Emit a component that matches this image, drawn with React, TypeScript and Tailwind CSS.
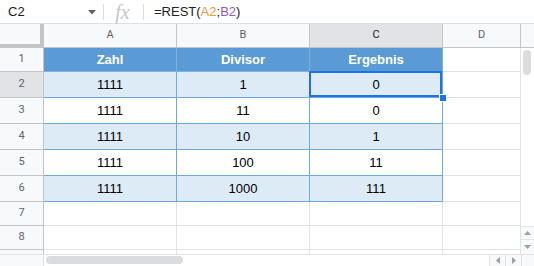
import React from 'react';

const cols = ['A', 'B', 'C', 'D'];

const rows = [
  { n: 1, vals: ['Zahl', 'Divisor', 'Ergebnis'], kind: 'head', h: 'h-[24px]' },
  { n: 2, vals: ['1111', '1', '0'], kind: 'band', h: 'h-[26px]' },
  { n: 3, vals: ['1111', '11', '0'], kind: 'plain', h: 'h-[26px]' },
  { n: 4, vals: ['1111', '10', '1'], kind: 'band', h: 'h-[26px]' },
  { n: 5, vals: ['1111', '100', '11'], kind: 'plain', h: 'h-[26px]' },
  { n: 6, vals: ['1111', '1000', '111'], kind: 'band', h: 'h-[26px]' },
  { n: 7, vals: [], kind: 'empty', h: 'h-[24px]' },
  { n: 8, vals: [], kind: 'empty', h: 'h-[24px]' },
];

function FormulaBar() {
  return (
    <div className="flex h-[24px] items-center border-b border-[#e1e1e1] text-[13px] text-[#202124]">
      <div className="flex h-full w-[103px] items-center justify-between pl-[8px] pr-[7px]">
        <span>C2</span>
        <svg width="8" height="5" viewBox="0 0 8 5" className="mt-[2px]">
          <path d="M0 0 L8 0 L4 4.5 Z" fill="#5f6368" />
        </svg>
      </div>
      <div className="h-[16px] w-px bg-[#dadce0]" />
      <div className="flex w-[39px] items-center justify-center pr-[2px] font-['Liberation_Serif',serif] text-[20px] italic leading-none text-[#c4c6c9]">
        fx
      </div>
      <div className="h-[16px] w-px bg-[#dadce0]" />
      <div className="pl-[10px]">
        =REST(<span className="text-[#f09c38]">A2</span>;<span className="text-[#9b59b6]">B2</span>)
      </div>
    </div>
  );
}

function ColumnHeader() {
  return (
    <div className="grid h-[24px] grid-cols-[44px_133px_133px_133px_78px_13px] font-['Roboto',sans-serif] text-[11px] text-[#5f6368]">
      <div className="border-b-[4px] border-r-[4px] border-[#c4c4c4] bg-[#f8f9fa]" />
      {cols.map((c) => (
        <div
          key={c}
          className={
            'flex items-center justify-center border-b border-r border-[#c4c4c4] ' +
            (c === 'C' ? 'bg-[#e1e3e6] text-[#202124]' : 'bg-[#f8f9fa]')
          }
        >
          {c}
        </div>
      ))}
      <div className="border-b border-[#c4c4c4] bg-[#f8f9fa]" />
    </div>
  );
}

function Row({ r }: { r: (typeof rows)[number] }) {
  const bg =
    r.kind === 'head' ? 'bg-[#5b9bd5]' : r.kind === 'band' ? 'bg-[#ddebf7]' : 'bg-white';
  const line = r.kind === 'head' ? 'border-[#7fb0e0]' : 'border-[#6fa8dc]';
  return (
    <div className={'grid grid-cols-[44px_133px_133px_133px_78px] ' + r.h}>
      <div
        className={
          'flex items-center justify-center border-b border-r border-[#c4c4c4] font-["Roboto",sans-serif] text-[11px] text-[#5f6368] ' +
          (r.n === 2 ? 'bg-[#e1e3e6]' : 'bg-[#f8f9fa]')
        }
      >
        {r.n}
      </div>
      {[0, 1, 2].map((i) => {
        const cellClass =
          r.kind === 'empty'
            ? 'border-b border-r border-[#e2e2e2] bg-white'
            : 'border-b border-r ' + line + ' ' + bg;
        const txt =
          r.kind === 'head' ? 'font-bold text-white' : 'text-[#000000]';
        return (
          <div
            key={i}
            className={'relative flex items-center justify-center text-[13px] ' + cellClass + ' ' + txt}
          >
            {r.vals[i]}
            {r.n === 2 && i === 2 && (
              <>
                <div className="absolute -left-px -top-px bottom-0 right-0 border-2 border-[#1a73e8]" />
                <div className="absolute -bottom-[4px] -right-[4px] z-10 h-[6px] w-[6px] bg-[#1a73e8] outline outline-1 outline-white" />
              </>
            )}
          </div>
        );
      })}
      <div className="border-b border-r border-[#e2e2e2] bg-white" />
    </div>
  );
}

export default function App() {
  return (
    <div className="h-[266px] w-[534px] overflow-hidden bg-white font-['Liberation_Sans',Arial,sans-serif]">
      <FormulaBar />
      <ColumnHeader />
      <div className="flex h-[206px]">
        <div className="flex w-[521px] flex-col">
          {rows.map((r) => (
            <Row key={r.n} r={r} />
          ))}
          <div className="grid h-[4px] grid-cols-[44px_133px_133px_133px_78px]">
            <div className="border-r border-[#c4c4c4] bg-[#f8f9fa]" />
            <div className="border-r border-[#e2e2e2]" />
            <div className="border-r border-[#e2e2e2]" />
            <div className="border-r border-[#e2e2e2]" />
            <div className="border-r border-[#e2e2e2]" />
          </div>
        </div>
        <div className="flex w-[13px] flex-col bg-white">
          <div className="flex-1 pl-[2px] pt-[2px]">
            <div className="h-[25px] w-[8px] rounded-full bg-[#dadce0]" />
          </div>
          <div className="flex h-[13px] items-center justify-center border-t border-[#e2e2e2] bg-[#f8f9fa]">
            <svg width="7" height="4" viewBox="0 0 7 4">
              <path d="M0 4 L7 4 L3.5 0 Z" fill="#9aa0a6" />
            </svg>
          </div>
          <div className="flex h-[15px] items-center justify-center border-t border-[#e2e2e2] bg-[#f8f9fa]">
            <svg width="7" height="4" viewBox="0 0 7 4">
              <path d="M0 0 L7 0 L3.5 4 Z" fill="#9aa0a6" />
            </svg>
          </div>
        </div>
      </div>
      <div className="flex h-[12px] border-t border-[#e2e2e2] bg-[#f8f9fa]">
        <div className="w-[44px] border-r border-[#e2e2e2]" />
        <div className="flex-1 bg-white pl-[2px] pt-[1px]">
          <div className="h-[8px] w-[137px] rounded-full bg-[#dadce0]" />
        </div>
        <div className="flex w-[16px] items-center justify-center border-l border-[#e2e2e2]">
          <svg width="4" height="7" viewBox="0 0 4 7">
            <path d="M4 0 L4 7 L0 3.5 Z" fill="#9aa0a6" />
          </svg>
        </div>
        <div className="flex w-[16px] items-center justify-center border-l border-[#e2e2e2]">
          <svg width="4" height="7" viewBox="0 0 4 7">
            <path d="M0 0 L0 7 L4 3.5 Z" fill="#9aa0a6" />
          </svg>
        </div>
        <div className="w-[13px] border-l border-[#e2e2e2]" />
      </div>
    </div>
  );
}
